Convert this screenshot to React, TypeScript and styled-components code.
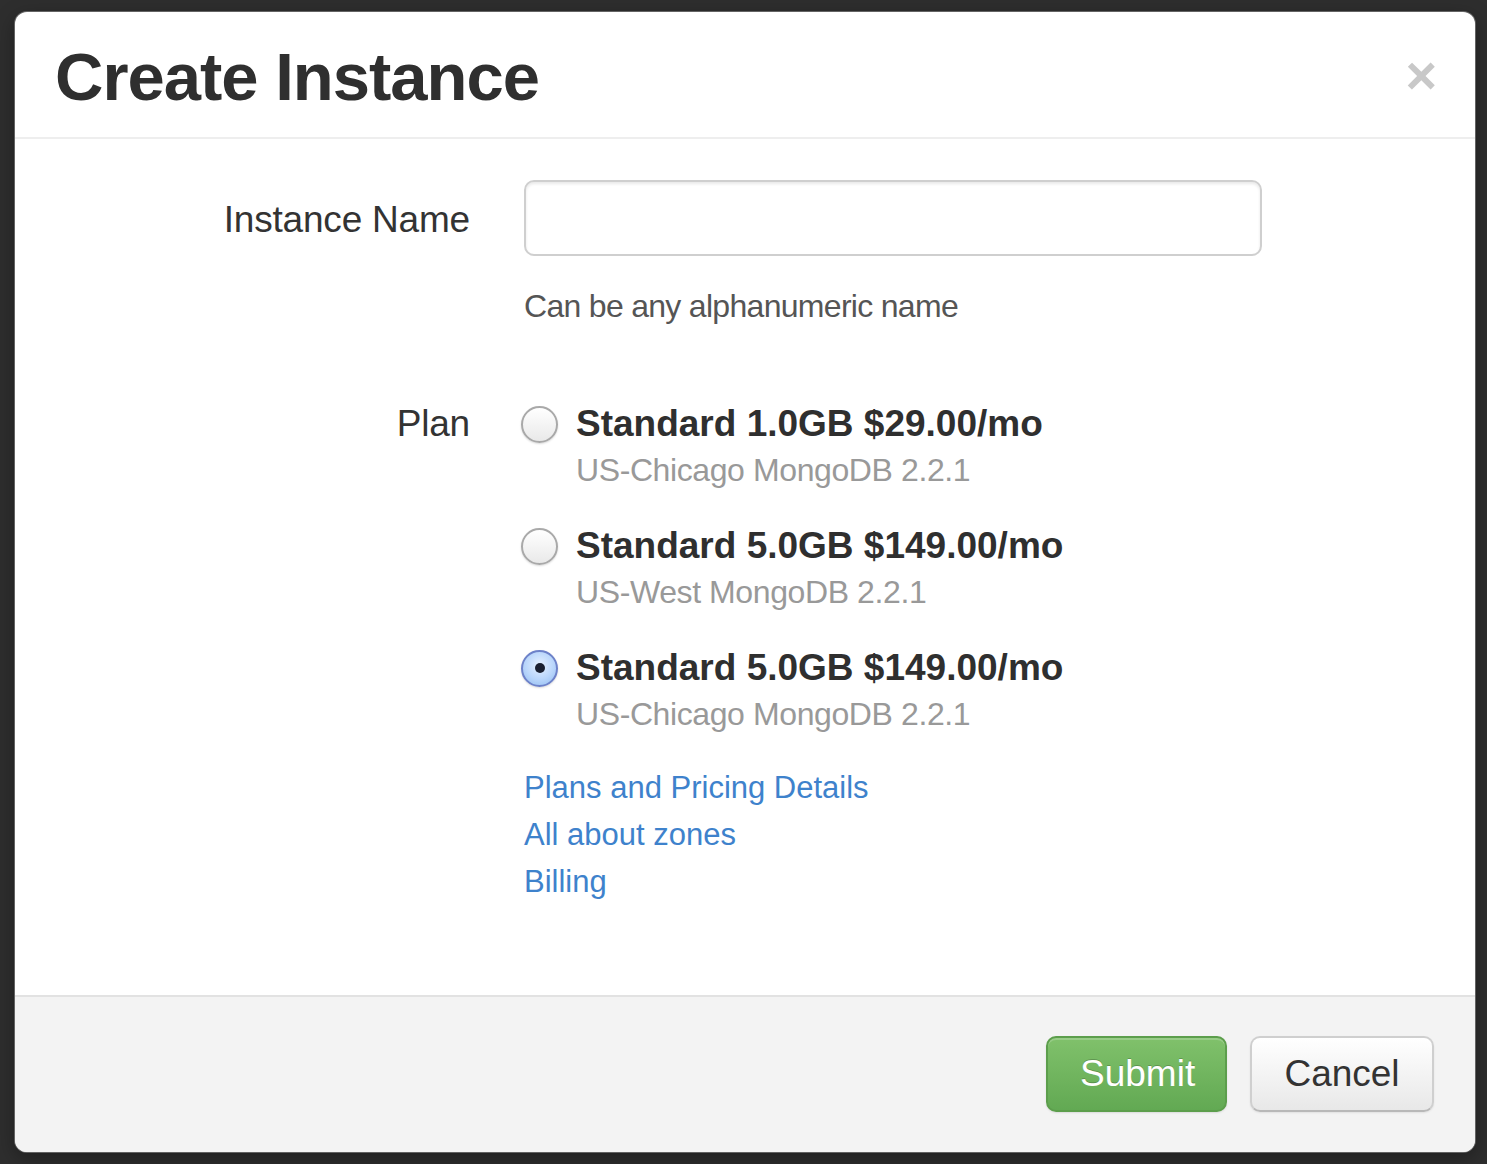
import React from "react";
import styled, { createGlobalStyle } from "styled-components";

const Global = createGlobalStyle`
  html, body { margin: 0; padding: 0; }
  body {
    background: #2e2e2e;
    font-family: "Liberation Sans", Arial, Helvetica, sans-serif;
    color: #333;
  }
`;

const Page = styled.div`
  width: 1487px;
  height: 1164px;
  padding: 12px 0 0 15px;
  box-sizing: border-box;
`;

const Modal = styled.div`
  width: 1460px;
  height: 1140px;
  background: #fff;
  border-radius: 12px;
  box-shadow: 0 0 0 1px rgba(140, 140, 140, 0.6), 0 6px 20px rgba(0, 0, 0, 0.35);
  display: flex;
  flex-direction: column;
  overflow: hidden;
`;

const Header = styled.div`
  height: 127px;
  box-sizing: border-box;
  padding: 26px 38px 22px 40px;
  border-bottom: 2px solid #eeeeee;
  display: flex;
  align-items: center;
  justify-content: space-between;
`;

const Title = styled.h3`
  margin: 0;
  font-size: 67px;
  line-height: 77px;
  font-weight: bold;
  letter-spacing: -1px;
  color: #2f2f2f;
`;

const Close = styled.span`
  font-size: 54px;
  line-height: 1;
  font-weight: bold;
  color: #c8c8c8;
  margin-top: -4px;
`;

const Body = styled.div`
  flex: 1;
  padding: 41px 40px 0 40px;
  display: flex;
  flex-direction: column;
`;

const FormRow = styled.div<{ $gap?: number }>`
  display: grid;
  grid-template-columns: 415px 1fr;
  column-gap: 54px;
  margin-bottom: ${(p) => p.$gap ?? 0}px;
`;

const Label = styled.label<{ $lh: number }>`
  text-align: right;
  font-size: 37px;
  line-height: ${(p) => p.$lh}px;
  color: #333;
  letter-spacing: -0.2px;
  padding-top: 2px;
`;

const Controls = styled.div`
  display: flex;
  flex-direction: column;
`;

const Input = styled.input`
  width: 738px;
  height: 76px;
  box-sizing: border-box;
  border: 2px solid #cfcfcf;
  border-radius: 10px;
  box-shadow: inset 0 2px 3px rgba(0, 0, 0, 0.09);
  background: #fff;
  outline: none;
  font-size: 37px;
  padding: 0 18px;
`;

const Help = styled.p`
  margin: 30px 0 0;
  font-size: 32px;
  line-height: 40px;
  letter-spacing: -0.7px;
  color: #555;
`;

const Options = styled.div`
  display: flex;
  flex-direction: column;
  gap: 30px;
  padding-top: 2px;
`;

const Option = styled.label`
  display: grid;
  grid-template-columns: 34px 1fr;
  column-gap: 18px;
  align-items: center;
`;

const Radio = styled.span<{ $checked?: boolean }>`
  width: 37px;
  height: 37px;
  margin-left: -3px;
  box-sizing: border-box;
  border-radius: 50%;
  display: flex;
  align-items: center;
  justify-content: center;
  border: 2px solid ${(p) => (p.$checked ? "#6d82c9" : "#a9a9a9")};
  background: ${(p) =>
    p.$checked
      ? "radial-gradient(circle at 50% 40%, #e6f1ff 0%, #b9d6fb 55%, #8fbaf0 100%)"
      : "linear-gradient(#ffffff, #e9e9e9)"};
  box-shadow: 0 1px 2px rgba(0, 0, 0, 0.15);
  &::after {
    content: "";
    width: 10px;
    height: 10px;
    border-radius: 50%;
    background: #1a2030;
    display: ${(p) => (p.$checked ? "block" : "none")};
  }
`;

const PlanTitle = styled.span`
  font-size: 37px;
  line-height: 46px;
  font-weight: bold;
  color: #2f2f2f;
`;

const PlanSub = styled.span`
  grid-column: 2;
  font-size: 32px;
  line-height: 46px;
  letter-spacing: -0.4px;
  color: #999;
`;

const Links = styled.div`
  display: flex;
  flex-direction: column;
  margin-top: 27px;
`;

const Link = styled.a`
  font-size: 31px;
  line-height: 47px;
  color: #3e82cc;
  text-decoration: none;
  align-self: flex-start;
`;

const Footer = styled.div`
  border-top: 2px solid #e2e2e2;
  background: #f3f3f3;
  padding: 39px 41px 40px;
  display: flex;
  justify-content: flex-end;
  gap: 23px;
`;

const Button = styled.button<{ $primary?: boolean }>`
  height: 76px;
  box-sizing: border-box;
  padding: 0 32px;
  font-family: "Liberation Sans", Arial, Helvetica, sans-serif;
  font-size: 37px;
  border-radius: 10px;
  cursor: pointer;
  ${(p) =>
    p.$primary
      ? `
    width: 181px;
    color: #fff;
    text-shadow: 0 -1px 0 rgba(0,0,0,0.2);
    background: linear-gradient(#80c16b, #62a953);
    border: 2px solid #5c9e4c;
    box-shadow: inset 0 2px 0 rgba(255,255,255,0.2), 0 1px 2px rgba(0,0,0,0.1);
  `
      : `
    width: 184px;
    color: #333;
    background: linear-gradient(#ffffff, #e8e8e8);
    border: 2px solid #cfcfcf;
    border-bottom-color: #b8b8b8;
    box-shadow: inset 0 2px 0 rgba(255,255,255,0.4), 0 1px 2px rgba(0,0,0,0.08);
  `}
`;

const plans = [
  { title: "Standard 1.0GB $29.00/mo", sub: "US-Chicago MongoDB 2.2.1", checked: false },
  { title: "Standard 5.0GB $149.00/mo", sub: "US-West MongoDB 2.2.1", checked: false },
  { title: "Standard 5.0GB $149.00/mo", sub: "US-Chicago MongoDB 2.2.1", checked: true },
];

export default function App() {
  return (
    <>
      <Global />
      <Page>
        <Modal>
          <Header>
            <Title>Create Instance</Title>
            <Close>×</Close>
          </Header>
          <Body>
            <FormRow $gap={73}>
              <Label $lh={76}>Instance Name</Label>
              <Controls>
                <Input type="text" />
                <Help>Can be any alphanumeric name</Help>
              </Controls>
            </FormRow>
            <FormRow>
              <Label $lh={46}>Plan</Label>
              <Controls>
                <Options>
                  {plans.map((p, i) => (
                    <Option key={i}>
                      <Radio $checked={p.checked} />
                      <PlanTitle>{p.title}</PlanTitle>
                      <PlanSub>{p.sub}</PlanSub>
                    </Option>
                  ))}
                </Options>
                <Links>
                  <Link href="#">Plans and Pricing Details</Link>
                  <Link href="#">All about zones</Link>
                  <Link href="#">Billing</Link>
                </Links>
              </Controls>
            </FormRow>
          </Body>
          <Footer>
            <Button $primary>Submit</Button>
            <Button>Cancel</Button>
          </Footer>
        </Modal>
      </Page>
    </>
  );
}
